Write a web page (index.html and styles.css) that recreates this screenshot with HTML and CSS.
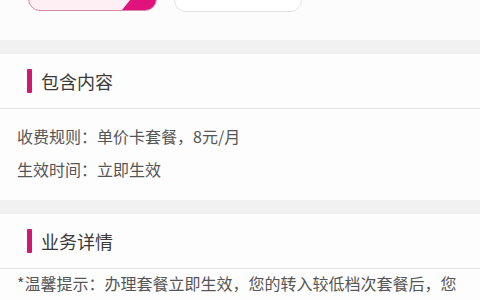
FILE: index.html
```html
<!DOCTYPE html>
<html lang="zh-CN">
<head>
<meta charset="utf-8">
<link rel="stylesheet" href="styles.css">
</head>
<body>
<div class="top">
  <div class="plans">
    <div class="plan active">
      <span class="corner">
        <svg class="check" width="20" height="16" viewBox="0 0 20 16"><polyline points="5,8 9,12 16,3" fill="none" stroke="#fff" stroke-width="2" stroke-linejoin="round" stroke-linecap="round"/></svg>
      </span>
    </div>
    <div class="plan"></div>
  </div>
</div>
<div class="gap"></div>
<section class="block">
  <div class="head"><span class="bar"></span><h2>包含内容</h2></div>
  <div class="rows">
    <p>收费规则：单价卡套餐，8元/月</p>
    <p>生效时间：立即生效</p>
  </div>
</section>
<div class="gap"></div>
<section class="block">
  <div class="head"><span class="bar"></span><h2>业务详情</h2></div>
  <div class="detail">
    <p>*温馨提示：办理套餐立即生效，您的转入较低档次套餐后，您</p>
  </div>
</section>
</body>
</html>
```
FILE: styles.css
```css
html, body {
  margin: 0;
  padding: 0;
  background: #fdfdfd;
  font-family: "Noto Sans CJK SC", "Noto Sans", sans-serif;
  width: 480px;
  height: 300px;
  overflow: hidden;
}
.top {
  display: flow-root;
  height: 40px;
  background: #fcfcfc;
}
.plans {
  display: flex;
  gap: 17px;
  padding-left: 28px;
  margin-top: -40px;
}
.plan {
  position: relative;
  width: 128px;
  height: 52px;
  box-sizing: border-box;
  border: 1px solid #e3e3e3;
  border-radius: 12px;
  background: #fff;
  overflow: hidden;
}
.plan.active {
  width: 129px;
  height: 51px;
  border: 1.5px solid #d58aa7;
  background: #fdeff4;
}
.corner {
  position: absolute;
  right: 0;
  bottom: 0;
  width: 34px;
  height: 42px;
  background: #e0137d;
  clip-path: polygon(100% 0, 100% 100%, 0 100%);
}
.check {
  position: absolute;
  right: 6px;
  bottom: 7px;
}
.gap {
  height: 14px;
  background: #f1f1f1;
}
.block {
  background: #fdfdfd;
}
.head {
  height: 54px;
  display: flex;
  align-items: center;
  gap: 9px;
  padding-left: 27px;
  border-bottom: 1px solid #e6e6e6;
}
.bar {
  width: 5px;
  height: 24px;
  background: #cc1a70;
  border-radius: 1px;
}
.head h2 {
  margin: 0;
  font-size: 18px;
  font-weight: normal;
  color: #3a3a3a;
  line-height: 24px;
}
.rows {
  padding: 11px 17px 14px;
}
.rows p {
  margin: 0;
  font-size: 16px;
  line-height: 33px;
  color: #555;
}
.detail {
  padding: 1px 17px 0;
}
.detail p {
  margin: 0;
  font-size: 16px;
  line-height: 26px;
  color: #555;
  white-space: nowrap;
}
```
